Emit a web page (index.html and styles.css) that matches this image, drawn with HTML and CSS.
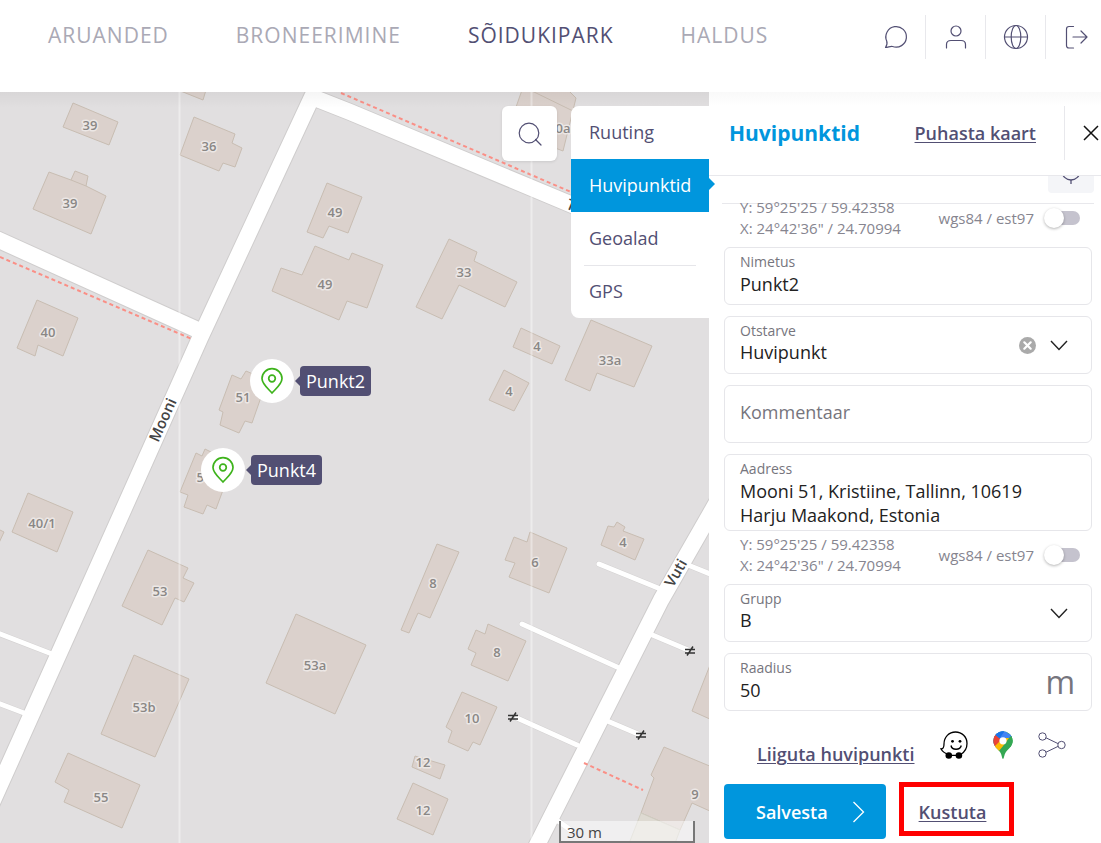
FILE: index.html
```html
<!DOCTYPE html>
<html lang="et">
<head>
<meta charset="utf-8">
<meta name="viewport" content="width=device-width, initial-scale=1">
<title>Huvipunktid</title>
<link rel="stylesheet" href="styles.css">
</head>
<body>
<div class="app">
  <header class="topbar">
    <nav class="main-nav">
      <a href="#">ARUANDED</a>
      <a href="#">BRONEERIMINE</a>
      <a href="#" class="current">SÕIDUKIPARK</a>
      <a href="#">HALDUS</a>
    </nav>
    <div class="tools">
      <button class="tool" aria-label="Vestlus"><svg width="26" height="26" viewBox="0 0 26 26"><path d="M2.500 23.500C4 21.500 4.500 19.500 3.700 17A10.300 10.300 0 1 1 9.500 22.500C7.500 22 5 23.500 2.500 23.500Z"/></svg></button>
      <button class="tool" aria-label="Konto"><svg width="26" height="26" viewBox="0 0 26 26"><circle cx="13" cy="7" r="5"/><path d="M3.500 24V20.500Q3.500 16.500 8 16.500H18Q22.500 16.500 22.500 20.500V24"/></svg></button>
      <button class="tool" aria-label="Keel"><svg width="26" height="26" viewBox="0 0 26 26"><circle cx="13" cy="13" r="11.500"/><ellipse cx="13" cy="13" rx="4.800" ry="11.500"/><path d="M1.500 13H24.500"/></svg></button>
      <button class="tool" aria-label="Logi välja"><svg width="26" height="26" viewBox="0 0 26 26"><path d="M9.500 2.500H5Q2.500 2.500 2.500 5V21.500Q2.500 24 5 24H9.500M9 13H23M17 7L23 13L17 19"/></svg></button>
    </div>
  </header>

  <div class="workspace">
    <main class="map">
      <svg class="map-tiles" viewBox="0 92 709 751" preserveAspectRatio="xMinYMin slice" aria-label="Kaart">
        <defs>
          <linearGradient id="shade" x1="0" y1="0" x2="0" y2="1"><stop offset="0" stop-color="#000" stop-opacity=".04"/><stop offset="1" stop-color="#000" stop-opacity="0"/></linearGradient>
          <g id="gate"><path d="M-5 -1.500H5M-5 2H5M-3 4.500L3 -4.500" fill="none" stroke="#333" stroke-width="1.500"/></g>
        </defs>
        <g class="buildings">
          <path d="M73 103L118 122L109 145L63 127Z"/>
          <path d="M49 172L71 180L75 171L88 176L86 186L106 196L91 234L33 209ZM71 180L86 186"/>
          <path d="M194 117L235 134L232 143L242 148L235 167L223 163L219 171L180 155Z"/>
          <path d="M178 90L203 100L206 90Z"/>
          <path d="M37 300L78 318L63 356L38 345L35 356L17 348Z"/>
          <path d="M327 183L362 197L348 233L329 226L323 238L307 232Z"/>
          <path d="M315 246L349 260L352 253L383 265L367 308L347 301L339 320L272 291L281 268L302 275Z"/>
          <path d="M449 239L477 252L474 261L517 282L505 307L459 285L442 319L416 307Z"/>
          <path d="M522 90L568 90L576 98L563 151L508 130ZM532 91L573 111"/>
          <path d="M591 320L652 346L634 387L597 373L590 391L565 380Z"/>
          <path d="M521 328L560 346L552 364L513 347Z"/>
          <path d="M504 370L529 383L514 411L489 400Z"/>
          <path d="M232 375L241 379L246 371L267 380L252 423L245 421L239 433L220 425L223 412L219 410Z"/>
          <path d="M196 453L202 456L205 449L233 463L216 509L207 505L203 514L184 507L188 495L180 492Z"/>
          <path d="M28 493L73 512L57 552L12 532ZM-2 529L4 532L-2 545Z"/>
          <path d="M148 550L188 568L183 578L194 583L184 602L175 598L162 625L122 606Z"/>
          <path d="M134 655L189 679L155 757L101 734Z"/>
          <path d="M296 614L366 645L335 714L266 683Z"/>
          <path d="M68 753L140 785L122 828L64 802L69 790L55 782Z"/>
          <path d="M437 544L459 552L430 618L418 613L409 633L401 630Z"/>
          <path d="M530 532L567 548L549 593L509 577L515 563L505 560L514 537L527 542Z"/>
          <path d="M608 526L614 527L617 522L625 527L623 531L644 539L635 560L601 545Z"/>
          <path d="M488 624L526 641L508 681L471 665L476 653L468 649L476 630L485 634Z"/>
          <path d="M462 692L497 707L480 745L473 742L468 751L448 742L452 731L446 727Z"/>
          <path d="M415 756L445 765L440 779L412 767Z"/>
          <path d="M413 783L448 799L433 835L397 819Z"/>
          <path d="M664 747L712 767L712 812L692 803L680 830L641 813L654 778L651 775Z"/>
          <path d="M641 813L680 830L674 846L628 846Z" class="pale"/>
          <path d="M712 660L692 711L712 720Z"/>
        </g>
        <g class="lanes casing"><path d="M599 564L658 588M522 624L617 667M517 718L577 745M650 634L688 650M605 720L638 734M688 565L715 576M-5 632L52 654M-5 702L24 713M558 821L572 831"/></g>
        <g class="roads casing"><path d="M-10 807L83 600L200 338L312 97L350 112L582 209"/><path d="M-10 236L200 331"/><path d="M720 497L661 600L530 859"/></g>
        <g class="lanes"><path d="M599 564L658 588M522 624L617 667M517 718L577 745M650 634L688 650M605 720L638 734M688 565L715 576M-5 632L52 654M-5 702L24 713M558 821L572 831"/></g>
        <g class="roads"><path d="M-10 807L83 600L200 338L312 97L350 112L582 209"/><path d="M-10 236L200 331"/><path d="M720 497L661 600L530 859"/></g>
        <g class="footways"><path d="M0 257L192 339"/><path d="M341 93L571 192"/><path d="M584 763L643 790"/></g>
        <use href="#gate" x="690" y="651"/><use href="#gate" x="513" y="717"/><use href="#gate" x="641" y="735"/>
        <g class="seams"><path d="M179.500 92V843M531.500 92V843"/></g>
        <g class="numbers">
          <text x="90" y="130">39</text><text x="209" y="151">36</text><text x="70" y="208">39</text><text x="48" y="337">40</text>
          <text x="335" y="217">49</text><text x="325" y="289">49</text><text x="464" y="277">33</text><text x="563" y="133">0a</text>
          <text x="537" y="351">4</text><text x="509" y="396">4</text><text x="610" y="365">33a</text><text x="243" y="402">51</text>
          <text x="204" y="482">51</text><text x="42" y="528">40/1</text><text x="160" y="596">53</text><text x="144" y="712">53b</text>
          <text x="315" y="670">53a</text><text x="101" y="802">55</text><text x="433" y="588">8</text><text x="535" y="567">6</text>
          <text x="623" y="547">4</text><text x="497" y="657">8</text><text x="472" y="723">10</text><text x="423" y="767">12</text>
          <text x="423" y="815">12</text><text x="695" y="799">9</text>
        </g>
        <g class="streets">
          <text transform="translate(163 420) rotate(-66)" y="5">Mooni</text>
          <text transform="translate(676 573) rotate(-60)" y="5">Vuti</text>
          <text transform="translate(575 207) rotate(23)" y="5">Te</text>
        </g>
        <rect x="0" y="92" width="709" height="16" fill="url(#shade)"/>
      </svg>

      <div class="marker marker-a"><span class="pin"><svg width="24" height="28" viewBox="0 0 24 28"><path d="M12 26C8 21.500 2 17 2 11.500A10 9.800 0 0 1 22 11.500C22 17 16 21.500 12 26Z"/><circle cx="12" cy="11.500" r="3.300"/></svg></span><span class="tag">Punkt2</span></div>
      <div class="marker marker-b"><span class="pin"><svg width="24" height="28" viewBox="0 0 24 28"><path d="M12 26C8 21.500 2 17 2 11.500A10 9.800 0 0 1 22 11.500C22 17 16 21.500 12 26Z"/><circle cx="12" cy="11.500" r="3.300"/></svg></span><span class="tag">Punkt4</span></div>

      <div class="map-controls">
        <button class="search" aria-label="Otsi"><svg width="26" height="26" viewBox="0 0 26 26"><circle cx="12" cy="12" r="9.800"/><path d="M18.500 18.500L24 24"/></svg></button>
        <nav class="layers">
          <a href="#">Ruuting</a>
          <a href="#" class="active">Huvipunktid</a>
          <a href="#">Geoalad</a>
          <a href="#" class="ruled">GPS</a>
        </nav>
      </div>
      <div class="scale">30 m</div>
    </main>

    <aside class="panel">
      <div class="panel-head">
        <h1>Huvipunktid</h1>
        <a href="#" class="link">Puhasta kaart</a>
        <button class="close" aria-label="Sulge"><svg width="16" height="16" viewBox="0 0 16 16"><path d="M1 1L15 15M15 1L1 15"/></svg></button>
      </div>
      <form class="form">
        <div class="cut-field"><button type="button" class="locate" aria-label="Vali kaardilt"><svg width="20" height="24" viewBox="0 0 20 24"><circle cx="10" cy="10" r="9"/><path d="M10 19V23"/></svg></button></div>
        <div class="coords coords-first">
          <p>Y: 59°25'25 / 59.42358<br>X: 24°42'36" / 24.70994</p>
          <label class="switch">wgs84 / est97<input type="checkbox"></label>
        </div>
        <div class="field"><label for="name">Nimetus</label><input id="name" type="text" value="Punkt2"></div>
        <div class="field">
          <label for="purpose">Otstarve</label>
          <select id="purpose"><option>Huvipunkt</option></select>
          <div class="adorn">
            <button type="button" class="clear" aria-label="Tühjenda"><svg width="17" height="17" viewBox="0 0 17 17"><circle cx="8.500" cy="8.500" r="8.500" fill="#aaa"/><path d="M5.300 5.300L11.700 11.700M11.700 5.300L5.300 11.700" stroke="#fff" stroke-width="2.200"/></svg></button>
            <svg class="chev" width="18" height="11" viewBox="0 0 18 11"><path d="M1 1L9 9.500L17 1"/></svg>
          </div>
        </div>
        <div class="field plain"><input type="text" placeholder="Kommentaar" aria-label="Kommentaar"></div>
        <div class="field"><label for="address">Aadress</label><textarea id="address" rows="2">Mooni 51, Kristiine, Tallinn, 10619
Harju Maakond, Estonia</textarea></div>
        <div class="coords">
          <p>Y: 59°25'25 / 59.42358<br>X: 24°42'36" / 24.70994</p>
          <label class="switch">wgs84 / est97<input type="checkbox"></label>
        </div>
        <div class="field">
          <label for="group">Grupp</label>
          <select id="group"><option>B</option></select>
          <div class="adorn"><svg class="chev" width="18" height="11" viewBox="0 0 18 11"><path d="M1 1L9 9.500L17 1"/></svg></div>
        </div>
        <div class="field"><label for="radius">Raadius</label><input id="radius" type="text" value="50"><span class="unit">m</span></div>

        <div class="share-row">
          <a href="#" class="link">Liiguta huvipunkti</a>
          <a href="#" aria-label="Waze"><svg width="28" height="28" viewBox="0 0 28 28"><path d="M8.500 23.500C5 22.500 2.500 20.500 1 18C3.500 18 4 16 4 13C4 6 9 1 15.500 1C22 1 27 6 27 12.500C27 17 24.500 21 21 23.300M11 24.300H17" fill="none" stroke="#000" stroke-width="1.300"/><circle cx="8.800" cy="24.500" r="3.300"/><circle cx="18.900" cy="24.500" r="3.300"/><circle cx="12.500" cy="10.300" r="1.400"/><circle cx="20" cy="10.300" r="1.400"/><path d="M11 14.500C12 19.500 20 19.500 21.300 14.500" fill="none" stroke="#000" stroke-width="1.400"/></svg></a>
          <a href="#" aria-label="Google Maps"><svg width="20" height="28" viewBox="0 0 20 28"><defs><clipPath id="drop"><path d="M10 28C9 28 9 24.500 7.500 21.800C5.500 18.500 .3 15.500 .3 9.800A9.700 9.600 0 0 1 19.700 9.800C19.700 15.500 14.500 18.500 12.500 21.800C11 24.500 11 28 10 28Z"/></clipPath></defs><g clip-path="url(#drop)"><rect width="20" height="28" fill="#34a853"/><path d="M0 18L20 -5V-5H0Z" fill="#4285f4"/><path d="M8 0L20 4V7L12 12L6 5Z" fill="#4285f4"/><path d="M2 3L10 10L2 19L-2 10Z" fill="#ea4335"/><path d="M2 3.500L6.500 7.500L11 1V-1H4Z" fill="#1a73e8"/><path d="M1 16L10 7L17 7L5 21Z" fill="#fbbc04"/><path d="M16 7L20 3V16H12L7 21L11 14Z" fill="#34a853"/></g><circle cx="10" cy="9.800" r="3.600" fill="#fff"/></svg></a>
          <a href="#" aria-label="Jaga"><svg width="28" height="28" viewBox="0 0 28 28"><g fill="none" stroke="#524f73" stroke-width="1"><circle cx="4.500" cy="5.500" r="3.700"/><circle cx="4.500" cy="22.500" r="3.700"/><circle cx="23.500" cy="14" r="3.700"/><path d="M8 6.800L20 12.600M8 21.200L20 15.400"/></g></svg></a>
        </div>
        <div class="actions">
          <button type="submit" class="save">Salvesta<svg width="13" height="22" viewBox="0 0 13 22"><path d="M1.500 1L11.500 11L1.500 21"/></svg></button>
          <a href="#" class="link delete">Kustuta</a>
        </div>
      </form>
    </aside>
  </div>
</div>
</body>
</html>
```
FILE: styles.css
```css
* { box-sizing: border-box; }
body { margin: 0; font-family: "Open Sans", "Noto Sans", sans-serif; font-size: 18px; color: #524f73; background: #fff; }
button { border: 0; padding: 0; background: none; color: inherit; font: inherit; }
a { color: inherit; text-decoration: none; }
svg { display: block; }
.app { display: flex; flex-direction: column; height: 100vh; overflow: hidden; }

.topbar { flex: none; display: flex; justify-content: space-between; align-items: flex-start; height: 92px; padding: 15px 0 0 48px; }
.main-nav { display: flex; gap: 67px; font-size: 21px; line-height: 41px; letter-spacing: 1px; color: #aaa9b5; }
.main-nav .current { color: #524f73; }
.tools { display: flex; }
.tool { display: grid; place-items: center; width: 60px; height: 44px; border-right: 1px solid #e8e8ec; }
.tool:last-child { width: 55px; border: 0; padding-left: 7px; }
.tool svg, .search svg { fill: none; stroke: #524f73; stroke-width: 1.2; stroke-linecap: round; stroke-linejoin: round; }

.workspace { flex: 1; min-height: 0; display: grid; grid-template-columns: 1fr 392px; }
.map { position: relative; overflow: hidden; background: #e1dfe0; }
.map-tiles { position: absolute; width: 100%; height: 100%; }
.buildings { fill: #dbd1cc; stroke: #c8bdb2; stroke-width: 1; }
.buildings .pale { fill: #dedad2; stroke: #cfccc0; }
.roads, .lanes { fill: none; stroke: #fff; stroke-linejoin: round; }
.roads { stroke-width: 16; }
.lanes { stroke-width: 5; stroke-linecap: round; }
.roads.casing { stroke: #cfcdcd; stroke-width: 18; }
.lanes.casing { stroke: #d4d2d2; stroke-width: 6; }
.footways { fill: none; stroke: #fa8f86; stroke-width: 2; stroke-dasharray: 4 3; }
.seams { stroke: #fff; stroke-opacity: .4; stroke-width: 2; }
.numbers { font-size: 13px; font-weight: 600; text-anchor: middle; fill: #8a8785; stroke: #ece7e5; stroke-width: 3; paint-order: stroke; stroke-linejoin: round; }
.streets { font-size: 15px; font-weight: 600; text-anchor: middle; fill: #444; stroke: #fff; stroke-width: 3; paint-order: stroke; }

.marker { position: absolute; display: flex; align-items: center; gap: 6px; }
.marker-a { left: 250px; top: 267px; }
.marker-b { left: 201px; top: 356px; }
.pin { display: grid; place-items: center; width: 44px; height: 44px; border-radius: 50%; background: #fff; }
.pin svg { fill: none; stroke: #3eb31c; stroke-width: 1.7; }
.tag { position: relative; padding: 0 6px; border-radius: 4px; background: #524f73; color: #fff; line-height: 30px; }
.tag::before { content: ""; position: absolute; left: -5px; top: 10px; border: 5px solid transparent; border-left: 0; border-right-color: #524f73; }

.map-controls { position: absolute; top: 14px; right: 0; display: flex; align-items: flex-start; gap: 14px; }
.search { display: grid; place-items: center; width: 55px; height: 55px; border-radius: 6px; background: #fff; box-shadow: 0 1px 3px rgba(0,0,0,.1); }
.layers { width: 138px; border-radius: 8px 0 0 8px; background: #fff; line-height: 53px; }
.layers a { position: relative; display: block; padding-left: 18px; }
.layers .active { background: #0096dd; color: #fff; }
.layers .ruled::before { content: ""; position: absolute; top: 0; left: 13px; right: 13px; border-top: 1px solid #e6e6ea; }
.scale { position: absolute; right: 14px; bottom: 0; width: 136px; height: 22px; padding-left: 6px; border: 2px solid #777; border-top: 0; background: rgba(255,255,255,.5); color: #444; font-size: 15px; line-height: 22px; }

.panel { position: relative; min-width: 0; display: flex; flex-direction: column; background: linear-gradient(#f9f9f9, #fff 14px); }
.panel::before { content: ""; position: absolute; left: 0; top: 86px; border: 6px solid transparent; border-right: 0; border-left-color: #0096dd; }
.panel-head { flex: none; display: flex; align-items: center; height: 84px; padding: 0 0 2px 20px; border-bottom: 1px solid #e8e8ec; }
.panel-head h1 { flex: 1; margin: 0; font-size: 21px; font-weight: 700; color: #0096dd; }
.link { font-weight: 600; text-decoration: underline; text-decoration-thickness: 1px; text-underline-offset: 2px; }
.close { display: grid; place-items: center; height: 54px; width: 37px; margin-left: 28px; padding-left: 16px; border-left: 1px solid #e8e8ec; }
.close svg { fill: none; stroke: #111; stroke-width: 1.5; }

.form { flex: 1; min-height: 0; overflow: hidden; display: flex; flex-direction: column; padding: 0 9px 0 15px; }
.cut-field { flex: none; display: flex; justify-content: flex-end; height: 28px; margin: 0 -2px; border-bottom: 1px solid #e8e8ec; }
.locate { width: 46px; height: 17px; overflow: hidden; display: flex; justify-content: center; align-items: flex-end; padding-bottom: 8px; background: #f4f5f8; border-radius: 0 0 4px 4px; }
.locate svg { flex: none; fill: none; stroke: #524f73; stroke-width: 1.3; }
.coords { flex: none; display: flex; justify-content: space-between; align-items: center; height: 42px; margin: -8px 10px 8px 16px; font-size: 15px; line-height: 21px; color: #86858f; }
.coords-first { margin-top: -7px; }
.coords p { margin: 0; }
.switch { display: flex; align-items: center; gap: 14px; }
.switch input { appearance: none; position: relative; width: 32px; height: 14px; margin: 0 2px 0 0; border-radius: 7px; background: #c5c3ce; }
.switch input::before { content: ""; position: absolute; left: -4px; top: -3px; width: 20px; height: 20px; border-radius: 50%; background: #fff; box-shadow: 0 1px 3px rgba(0,0,0,.3); }

.field { flex: none; position: relative; display: flex; flex-direction: column; min-height: 58px; margin-bottom: 11px; padding: 4px 15px 0; border: 1px solid #e6e6ea; border-radius: 6px; background: #fff; }
.field label { font-size: 14px; line-height: 19px; color: #76757d; }
.field input, .field select, .field textarea { appearance: none; width: 100%; height: 25px; margin: 0; padding: 0; border: 0; outline: 0; background: none; font: inherit; line-height: 24px; color: #222; }
.field select { height: 24px; }
.field textarea { display: block; height: 52px; padding-top: 1px; resize: none; overflow: hidden; }
.plain { justify-content: center; padding-top: 0; padding-bottom: 4px; }
.plain input::placeholder { color: #76757d; opacity: 1; }
.adorn { position: absolute; right: 23px; top: 0; bottom: 0; display: flex; align-items: center; gap: 14px; }
.chev { fill: none; stroke: #222; stroke-width: 1.4; }
.clear svg { stroke-linecap: round; }
.unit { position: absolute; right: 16px; top: 4px; font-size: 32px; line-height: 48px; color: #76757d; }

.share-row { flex: none; display: flex; align-items: flex-start; height: 62px; padding: 9px 26px 0 33px; justify-content: space-between; }
.share-row .link { line-height: 48px; margin-top: -1px; }
.actions { flex: none; display: flex; gap: 13px; align-items: flex-start; }
.save { display: flex; align-items: center; justify-content: space-between; width: 162px; height: 55px; padding: 0 21px 0 32px; border-radius: 4px; background: #0096dd; color: #fff; font-weight: 600; }
.save svg { fill: none; stroke: #fff; stroke-width: 1.3; }
.delete { width: 115px; height: 54px; margin-top: -2px; padding-right: 8px; border: 5px solid #f00; text-align: center; line-height: 50px; }
```
